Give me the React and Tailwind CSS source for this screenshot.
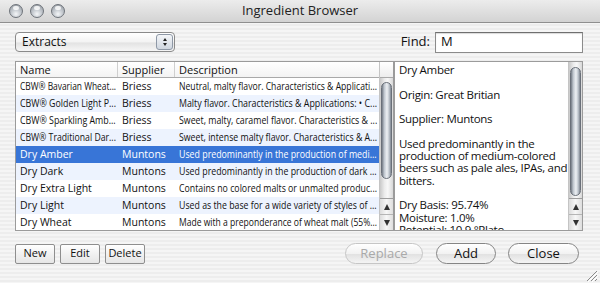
import React, { useLayoutEffect, useRef, useState } from "react";

const rows = [
  ["CBW® Bavarian Wheat...", "Briess", "Neutral, malty flavor. Characteristics & Applicati..."],
  ["CBW® Golden Light P...", "Briess", "Malty flavor. Characteristics & Applications: • C..."],
  ["CBW® Sparkling Amb...", "Briess", "Sweet, malty, caramel flavor. Characteristics & ..."],
  ["CBW® Traditional Dar...", "Briess", "Sweet, intense malty flavor. Characteristics & A..."],
  ["Dry Amber", "Muntons", "Used predominantly in the production of medi..."],
  ["Dry Dark", "Muntons", "Used predominantly in the production of dark ..."],
  ["Dry Extra Light", "Muntons", "Contains no colored malts or unmalted produc..."],
  ["Dry Light", "Muntons", "Used as the base for a wide variety of styles of ..."],
  ["Dry Wheat", "Muntons", "Made with a preponderance of wheat malt (55%..."],
];

const detail = [
  "Dry Amber",
  "",
  "Origin: Great Britian",
  "",
  "Supplier: Muntons",
  "",
  "Used predominantly in the",
  "production of medium-colored",
  "beers such as pale ales, IPAs, and",
  "bitters.",
  "",
  "Dry Basis: 95.74%",
  "Moisture: 1.0%",
  "Potential: 10.9 °Plato",
];

// Cocoa tightens truncated cell text to fit; the factor is measured at run time.
function Fit({ children, className }) {
  const outer = useRef(null);
  const inner = useRef(null);
  const [s, setS] = useState(1);
  useLayoutEffect(() => {
    const avail = outer.current.clientWidth - 6;
    const natural = inner.current.scrollWidth;
    setS(Math.min(1, avail / natural));
  }, []);
  return (
    <div ref={outer} className={`overflow-hidden whitespace-nowrap pl-[4px] ${className}`}>
      <span ref={inner} className="inline-block origin-left" style={{ transform: `scaleX(${s})` }}>
        {children}
      </span>
    </div>
  );
}

function Light() {
  return (
    <div className="w-[14px] h-[14px] rounded-full border border-[#6e737a] bg-[radial-gradient(circle_at_50%_75%,#f4f6f8_0%,#c3c8ce_45%,#8d939a_100%)] relative overflow-hidden">
      <div className="absolute left-[3px] top-[1px] w-[6px] h-[4px] rounded-full bg-white/80" />
    </div>
  );
}

function ScrollBar({ thumbTop, thumbBottom, header }) {
  return (
    <div className="w-[14px] shrink-0 h-full flex flex-col border-l border-[#c4c4c4]">
      {header && <div className="h-[16px] shrink-0 border-b border-[#a9a9a9] bg-[linear-gradient(#ffffff,#ededed)]" />}
      <div className="flex-1 relative bg-[linear-gradient(90deg,#c9c9c9,#ececec_35%,#f8f8f8_60%,#d8d8d8)]">
        <div
          className="absolute left-[1px] right-[1px] rounded-full border border-[#6a7079] bg-[linear-gradient(90deg,#737a84,#bfc6ce_25%,#eef1f4_55%,#bcc3cb_80%,#7e858f)]"
          style={{ top: thumbTop, bottom: thumbBottom }}
        />
      </div>
      <div className="h-[32px] shrink-0 flex flex-col border-t border-[#9d9d9d] bg-[linear-gradient(90deg,#dcdcdc,#f7f7f7_50%,#dedede)]">
        <div className="h-[16px] flex items-center justify-center border-b border-[#b5b5b5]">
          <div className="w-0 h-0 border-l-[3.5px] border-r-[3.5px] border-b-[6px] border-l-transparent border-r-transparent border-b-[#333]" />
        </div>
        <div className="flex-1 flex items-center justify-center">
          <div className="w-0 h-0 border-l-[3.5px] border-r-[3.5px] border-t-[6px] border-l-transparent border-r-transparent border-t-[#333]" />
        </div>
      </div>
    </div>
  );
}

function SmallButton({ children, w }) {
  return (
    <div className={`h-[20px] ${w} flex items-center justify-center rounded-[2px] border border-[#8e8e8e] bg-[linear-gradient(#ffffff,#f1f1f1_50%,#e6e6e6)] text-[11px] text-[#111]`}>
      {children}
    </div>
  );
}

function Pill({ children, w, disabled }) {
  return (
    <div
      className={`h-[21px] ${w} flex items-center justify-center rounded-full border ${
        disabled ? "border-[#c6c6c6] text-[#a9a9a9]" : "border-[#858585] text-[#111]"
      } bg-[linear-gradient(#ffffff,#f2f2f2_50%,#e2e2e2_55%,#f4f4f4)] text-[13px]`}
    >
      {children}
    </div>
  );
}

export default function App() {
  return (
    <div className="w-[600px] h-[283px] overflow-hidden flex flex-col font-['Open_Sans','Noto_Sans',sans-serif] text-[#111] bg-[repeating-linear-gradient(180deg,#ededed_0px,#ededed_2px,#f5f5f5_2px,#f5f5f5_4px)] relative">
      {/* Title bar */}
      <div className="h-[23px] shrink-0 flex items-center border-b border-[#8f8f8f] bg-[linear-gradient(#ececec,#d3d3d3)] relative">
        <div className="flex gap-[7px] pl-[9px]">
          <Light />
          <Light />
          <Light />
        </div>
        <div className="absolute inset-0 flex items-center justify-center text-[13px] text-[#222]">
          Ingredient Browser
        </div>
      </div>

      <div className="flex-1 flex flex-col pl-[15px] pr-[17px] pt-[9px]">
        {/* Top controls */}
        <div className="flex items-center h-[20px]">
          <div className="w-[160px] h-[20px] flex items-center rounded-[4px] border border-[#8a8a8a] bg-[linear-gradient(#ffffff,#f3f3f3_50%,#e3e3e3_55%,#f6f6f6)]">
            <span className="flex-1 pl-[6px] text-[12px]">Extracts</span>
            <div className="w-[17px] h-[16px] mr-[1px] rounded-[3px] border border-[#8e98a6] bg-[linear-gradient(#f4f6f9,#cfd6df)] flex flex-col items-center justify-center gap-[2px]">
              <div className="w-0 h-0 border-l-[2.5px] border-r-[2.5px] border-b-[3px] border-l-transparent border-r-transparent border-b-[#222]" />
              <div className="w-0 h-0 border-l-[2.5px] border-r-[2.5px] border-t-[3px] border-l-transparent border-r-transparent border-t-[#222]" />
            </div>
          </div>
          <div className="flex-1" />
          <span className="text-[13px] mr-[5px]">Find:</span>
          <div className="w-[148px] h-[21px] border border-[#8b8b8b] border-t-[#6f6f6f] bg-white flex items-center pl-[5px] text-[13px] shadow-[inset_0_1px_1px_rgba(0,0,0,0.15)]">
            M
          </div>
        </div>

        {/* Table + details */}
        <div className="mt-[9px] flex h-[170px]">
          <div className="w-[379px] h-full border border-[#9b9b9b] bg-white flex overflow-hidden">
            <div className="flex-1 flex flex-col overflow-hidden">
              <div className="h-[16px] shrink-0 flex border-b border-[#a9a9a9] bg-[linear-gradient(#ffffff,#f3f3f3)] text-[11px] leading-[15px]">
                <div className="w-[102px] pl-[4px] border-r border-[#cfcfcf]">Name</div>
                <div className="w-[57px] pl-[4px] border-r border-[#cfcfcf]">Supplier</div>
                <div className="flex-1 pl-[4px]">Description</div>
              </div>
              {rows.map((r, i) => {
                const sel = i === 4;
                const bg = sel ? "bg-[#3875d7] text-white" : i % 2 === 1 ? "bg-[#edf3fe]" : "bg-white";
                return (
                  <div key={i} className={`h-[17px] shrink-0 flex items-center text-[10.5px] ${bg}`}>
                    <Fit className="w-[102px]">{r[0]}</Fit>
                    <div className="w-[57px] pl-[4px] whitespace-nowrap overflow-hidden">{r[1]}</div>
                    <Fit className="flex-1">{r[2]}</Fit>
                  </div>
                );
              })}
            </div>
            <ScrollBar header thumbTop={4} thumbBottom={19} />
          </div>

          <div className="w-[189px] h-full border border-[#9b9b9b] bg-white flex overflow-hidden">
            <div className="flex-1 min-w-0 pl-[4px] pt-[2px] text-[11.5px] leading-[12.3px] tracking-[-0.3px] overflow-hidden">
              {detail.map((l, i) => (
                <div key={i} className="h-[12.3px] whitespace-nowrap">{l}</div>
              ))}
            </div>
            <ScrollBar thumbTop={5} thumbBottom={2} />
          </div>
        </div>

        {/* Buttons */}
        <div className="mt-[12px] flex items-center">
          <div className="flex gap-[5px]">
            <SmallButton w="w-[40px]">New</SmallButton>
            <SmallButton w="w-[40px]">Edit</SmallButton>
            <SmallButton w="w-[40px]">Delete</SmallButton>
          </div>
          <div className="flex-1" />
          <Pill w="w-[78px]" disabled>Replace</Pill>
          <div className="w-[13px]" />
          <Pill w="w-[60px]">Add</Pill>
          <div className="w-[12px]" />
          <Pill w="w-[71px]">Close</Pill>
          <div className="w-[4px]" />
        </div>
      </div>

      {/* Resize grip */}
      <svg className="absolute right-[2px] bottom-[1px]" width="14" height="14" viewBox="0 0 14 14">
        <path d="M13 3 L3 13 M13 7 L7 13 M13 11 L11 13" stroke="#8a8a8a" strokeWidth="1" />
        <path d="M14 4 L4 14 M14 8 L8 14" stroke="#ffffff" strokeWidth="1" />
      </svg>
    </div>
  );
}
